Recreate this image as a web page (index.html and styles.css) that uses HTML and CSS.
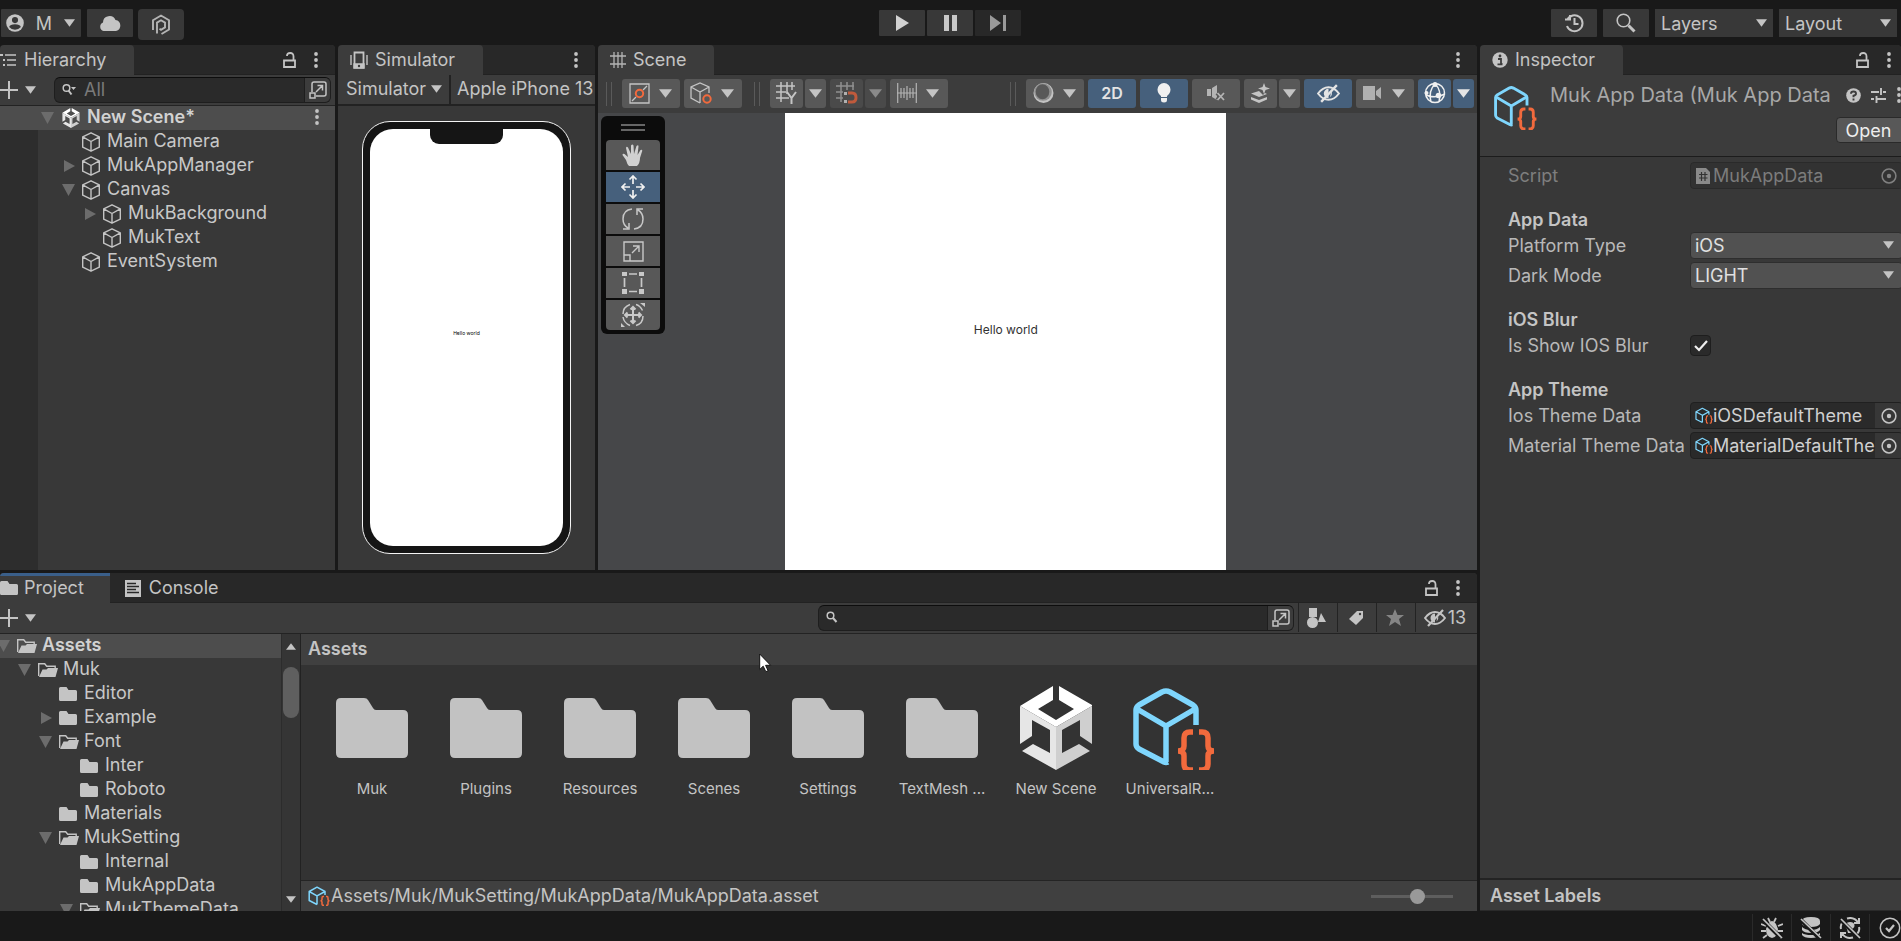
FILE: index.html
```html
<!DOCTYPE html>
<html lang="en">
<head>
<meta charset="utf-8">
<title>New Scene - Editor</title>
<link rel="stylesheet" href="styles.css">
</head>
<body>
<svg class="defs" aria-hidden="true">
  <symbol id="i-down" viewBox="0 0 12 8"><path d="M0 0h12L6 8z" fill="currentColor"/></symbol>
  <symbol id="i-fold-open" viewBox="0 0 14 14"><path d="M0 1h13L6.500 13z" fill="currentColor"/></symbol>
  <symbol id="i-fold-shut" viewBox="0 0 14 14"><path d="M2 1v12l11-6z" fill="currentColor"/></symbol>
  <symbol id="i-dots" viewBox="0 0 6 16"><g fill="currentColor"><circle cx="3" cy="2" r="1.900"/><circle cx="3" cy="8" r="1.900"/><circle cx="3" cy="14" r="1.900"/></g></symbol>
  <symbol id="i-lock" viewBox="0 0 13 16"><path d="M1 8.500h11V15H1zM10.500 8V4.500Q10.500 1 7.200 1T4 4" fill="none" stroke="currentColor" stroke-width="1.800"/></symbol>
  <symbol id="i-plus" viewBox="0 0 18 18"><path d="M9 0v18M0 9h18" stroke="currentColor" stroke-width="2"/></symbol>
  <symbol id="i-search" viewBox="0 0 14 14"><circle cx="4.500" cy="4.500" r="3.300" fill="none" stroke="currentColor" stroke-width="1.500"/><path d="M7 7l3.500 4" stroke="currentColor" stroke-width="2"/></symbol>
  <symbol id="i-pop" viewBox="0 0 18 18"><path d="M3 11V3q0-2 2-2h10q2 0 2 2v10q0 2-2 2H7" fill="none" stroke="currentColor" stroke-width="1.500"/><path d="M1 12h5v5H1zM7 11l6-6M8.500 4.500h5v5" fill="none" stroke="currentColor" stroke-width="1.500"/></symbol>
  <symbol id="i-cube" viewBox="0 0 20 20"><path d="M10 .8l8.300 4v10.400L10 19.200 1.700 15.200V4.800zM1.700 4.800L10 9.500l8.300-4.700M10 9.500v9.500" fill="none" stroke="currentColor" stroke-width="1.400" stroke-linejoin="round"/></symbol>
  <symbol id="i-folder" viewBox="0 0 20 16"><path d="M0 2.500Q0 1 1.500 1h6l2 3H16.500q1.500 0 1.500 1.500V13.500Q18 15 16.500 15h-15Q0 15 0 13.500z" fill="currentColor"/></symbol>
  <symbol id="i-folder-open" viewBox="0 0 20 16"><path d="M.7 14V1.700h6l2 2.600h8.500v2.400" fill="none" stroke="currentColor" stroke-width="1.400"/><path d="M4.500 7.500h4L10 6h10L17.500 15H1z" fill="currentColor"/></symbol>
  <symbol id="i-bigfolder" viewBox="0 0 72 60"><path d="M0 5Q0 0 5 0h23q3 0 4 2l5 8q1 2 3 2h27q5 0 5 5v38q0 5-5 5H5q-5 0-5-5z" fill="#c2c2c2"/></symbol>
  <symbol id="i-so" viewBox="0 0 84 84">
    <path d="M63 37V22q0-3-3-5L37 4q-4-2-8 0L6 17q-3 2-3 5v34q0 3 3 5l25 13q2 1 4 0M4 21l29 17 29-17M33 38v36" fill="none" stroke="#7fd6fd" stroke-width="5.500" stroke-linejoin="round"/>
    <path d="M60 44h-3q-6 0-6 6v8q0 5-6 5 6 0 6 5v8q0 6 6 6h3M66 44h3q6 0 6 6v8q0 5 6 5-6 0-6 5v8q0 6-6 6h-3" fill="none" stroke="#f26a3d" stroke-width="5.500"/>
  </symbol>
  <symbol id="i-so-small" viewBox="0 0 22 20">
    <path d="M17 9V5.500L9 1.200 1.200 5.500v9L9 18.500M1.200 5.500L9 9.800l8-4.300M9 9.800v8.700" fill="none" stroke="#7fd6fd" stroke-width="1.500" stroke-linejoin="round"/>
    <path d="M16 10.500h-1q-1 0-1 1.500v1.500q0 1.200-1.500 1.200 1.500 0 1.500 1.300v2q0 1.300 1 1.300h1M18 10.500h1q1 0 1 1.500v1.500q0 1.200 1.500 1.200-1.500 0-1.500 1.300v2q0 1.300-1 1.300h-1" fill="none" stroke="#f26a3d" stroke-width="1.500"/>
  </symbol>
  <symbol id="i-unity" viewBox="0 0 72 84">
    <path d="M33 0v14L18 23l18 11 18-11-15-9V0l33 19v1L36 41 0 20z" fill="#fff"/>
    <path d="M0 20l36 21v43L2 65l11-7 17 9V44L12 34v16L0 58z" fill="#e6e6e6"/>
    <path d="M72 20L36 41v43l34-19-11-7-17 9V44l18-10v16l12 8z" fill="#cfcfcf"/>
  </symbol>
  <symbol id="i-target" viewBox="0 0 16 16"><circle cx="8" cy="8" r="6.900" fill="none" stroke="currentColor" stroke-width="1.500"/><circle cx="8" cy="8" r="2.200" fill="currentColor"/></symbol>
  <symbol id="i-hidden" viewBox="0 0 22 18"><path d="M1 9Q5.500 3 11 3t10 6q-4.500 6-10 6T1 9z" fill="none" stroke="currentColor" stroke-width="1.900"/><path d="M11 4.500a4.500 4.500 0 0 0 0 9zM13.500 6.500q2 3-1 6" fill="currentColor"/><path d="M4 17L19 1" stroke="currentColor" stroke-width="2.200"/></symbol>
</svg>

<div class="app">
  <header class="topbar">
    <div class="group">
      <button class="tbtn account" aria-label="Account M"><svg width="18" height="18" viewBox="0 0 20 20"><circle cx="10" cy="10" r="9.800" fill="#c4c4c4"/><circle cx="10" cy="6.800" r="3.400" fill="#383838"/><path d="M3.500 14.500q1-3 6.500-3t6.500 3Q14 17.500 10 17.500T3.500 14.500z" fill="#383838"/></svg><span>M</span><svg width="11" height="8"><use href="#i-down"/></svg></button>
      <button class="tbtn small" aria-label="Cloud"><svg width="22" height="17" viewBox="0 0 22 17"><path d="M4.500 16A4.500 4.500 0 0 1 4 7.500 6.500 6.500 0 0 1 16.500 5 5.600 5.600 0 0 1 17 16z" fill="#c4c4c4"/></svg></button>
      <button class="tbtn small plastic" aria-label="Version control"><svg width="20" height="22" viewBox="0 0 20 22"><path d="M2 16V6.200L10 1.500l8 4.700v9.300L10.500 20M6 19.500V8.600l4-2.300 4 2.300v4.800l-4 2.400-1.500-1" fill="none" stroke="#b4b4b4" stroke-width="1.900"/></svg></button>
    </div>
    <div class="group play">
      <button class="tbtn" aria-label="Play"><svg width="13" height="16" viewBox="0 0 13 16"><path d="M0 0v16L13 8z" fill="#d2d2d2"/></svg></button>
      <button class="tbtn" aria-label="Pause"><svg width="13" height="16" viewBox="0 0 13 16"><path d="M0 0h5v16H0zM8 0h5v16H8z" fill="#c8c8c8"/></svg></button>
      <button class="tbtn off" aria-label="Step"><svg width="16" height="16" viewBox="0 0 16 16"><path d="M0 0v16l11-8zM13 0h3v16h-3z" fill="#9a9a9a"/></svg></button>
    </div>
    <div class="group right">
      <button class="tbtn small" aria-label="History"><svg width="20" height="20" viewBox="0 0 20 20"><path d="M3.200 7A8 8 0 1 1 3 13M1 6.500h5V2M10.500 5v6h4" fill="none" stroke="#c4c4c4" stroke-width="2"/></svg></button>
      <button class="tbtn small" aria-label="Search"><svg width="20" height="20" viewBox="0 0 20 20"><circle cx="7.500" cy="7.500" r="6.300" fill="none" stroke="#c4c4c4" stroke-width="1.600"/><path d="M12.500 12.500l6 6" stroke="#c4c4c4" stroke-width="3"/></svg></button>
      <label class="drop"><select aria-label="Layers"><option>Layers</option></select><svg width="11" height="8"><use href="#i-down"/></svg></label>
      <label class="drop"><select aria-label="Layout"><option>Layout</option></select><svg width="11" height="8"><use href="#i-down"/></svg></label>
    </div>
  </header>

  <div class="workspace">
    <main class="left">
      <div class="upper">
        <section class="panel hierarchy">
          <div class="tabs">
            <h2 class="tab bleed"><svg width="17" height="14" viewBox="0 0 17 14"><path d="M5 2h11M7 7h9M7 12h9" stroke="#c4c4c4" stroke-width="1.600"/><path d="M0 1h3v2H0zM3 6h2v2H3zM3 11h2v2H3z" fill="#c4c4c4"/></svg>Hierarchy</h2>
            <div class="tabtools"><button class="bare" aria-label="Lock"><svg width="13" height="16"><use href="#i-lock"/></svg></button><button class="bare" aria-label="Menu"><svg width="6" height="16"><use href="#i-dots"/></svg></button></div>
          </div>
          <div class="bar">
            <button class="bare add" aria-label="Add"><svg width="18" height="18"><use href="#i-plus"/></svg><svg width="11" height="8"><use href="#i-down"/></svg></button>
            <div class="search"><svg width="14" height="13" viewBox="0 0 14 13"><circle cx="4.500" cy="5" r="3.300" fill="none" stroke="#c4c4c4" stroke-width="1.500"/><path d="M6.500 7.500l3 4" stroke="#c4c4c4" stroke-width="2"/><path d="M9 4h5l-2.500 3z" fill="#c4c4c4"/></svg><input type="text" placeholder="All" aria-label="Search hierarchy"><button class="bare pop" aria-label="Open search"><svg width="18" height="18"><use href="#i-pop"/></svg></button></div>
          </div>
          <ul class="tree scene-tree">
            <li class="row root"><svg class="arrow"><use href="#i-fold-open"/></svg><svg class="ico"><use href="#i-unity"/></svg><b>New Scene*</b><button class="bare rowmenu" aria-label="Scene menu"><svg width="6" height="16"><use href="#i-dots"/></svg></button></li>
            <li class="row d1"><span class="arrow"></span><svg class="ico"><use href="#i-cube"/></svg>Main Camera</li>
            <li class="row d1"><svg class="arrow"><use href="#i-fold-shut"/></svg><svg class="ico"><use href="#i-cube"/></svg>MukAppManager</li>
            <li class="row d1"><svg class="arrow"><use href="#i-fold-open"/></svg><svg class="ico"><use href="#i-cube"/></svg>Canvas</li>
            <li class="row d2"><svg class="arrow"><use href="#i-fold-shut"/></svg><svg class="ico"><use href="#i-cube"/></svg>MukBackground</li>
            <li class="row d2"><span class="arrow"></span><svg class="ico"><use href="#i-cube"/></svg>MukText</li>
            <li class="row d1"><span class="arrow"></span><svg class="ico"><use href="#i-cube"/></svg>EventSystem</li>
          </ul>
        </section>

        <section class="panel simulator">
          <div class="tabs">
            <h2 class="tab"><svg width="18" height="18" viewBox="0 0 18 18"><path d="M4.500 1.500h9v15h-9z" fill="none" stroke="#c4c4c4" stroke-width="1.800"/><path d="M4 13h10v4H4zM1 4v10M17 4v10" fill="#c4c4c4" stroke="#c4c4c4" stroke-width="1.400"/><circle cx="9" cy="15" r="1.200" fill="#3c3c3c"/></svg>Simulator</h2>
            <div class="tabtools"><button class="bare" aria-label="Menu"><svg width="6" height="16"><use href="#i-dots"/></svg></button></div>
          </div>
          <div class="bar simbar">
            <button class="bare">Simulator<svg width="11" height="8"><use href="#i-down"/></svg></button>
            <button class="bare device">Apple iPhone 13</button>
          </div>
          <div class="simview"><div class="phone"><div class="screen"><i class="notch"></i><span>Hello world</span></div></div></div>
        </section>

        <section class="panel scene">
          <div class="tabs">
            <h2 class="tab"><svg width="16" height="16" viewBox="0 0 16 16"><path d="M4 0v16M8 0v16M12 0v16M0 4h16M0 12h16" stroke="#b4b4b4" stroke-width="1.300"/></svg>Scene</h2>
            <div class="tabtools"><button class="bare" aria-label="Menu"><svg width="6" height="16"><use href="#i-dots"/></svg></button></div>
          </div>
          <div class="scenebar">
            <div class="sgroup">
              <i class="grip"></i>
              <button class="sbtn wide" aria-label="Pivot"><svg width="21" height="21" viewBox="0 0 21 21"><path d="M1 1h19v19H1zM3 18l4-4M14 7l4-4" fill="none" stroke="#c4c4c4" stroke-width="1.300"/><circle cx="10.500" cy="10.500" r="3.700" fill="none" stroke="#f26a3d" stroke-width="2"/></svg><svg width="13" height="9"><use href="#i-down"/></svg></button>
              <button class="sbtn wide" aria-label="Orientation"><svg width="22" height="22" viewBox="0 0 22 22"><path d="M19 11V5l-9-4-9 4v11l9 5M1 5l9 5 9-5M10 10v11" fill="none" stroke="#c4c4c4" stroke-width="1.300"/><circle cx="17" cy="17" r="3.700" fill="none" stroke="#f26a3d" stroke-width="2"/></svg><svg width="13" height="9"><use href="#i-down"/></svg></button>
            </div>
            <div class="sgroup">
              <i class="grip"></i>
              <div class="pair"><button class="sbtn" aria-label="Grid axis"><svg width="21" height="22" viewBox="0 0 21 22"><path d="M5 0v20M11 0v12M16 0v8M0 4h19M0 10h10M0 16h13" stroke="#c4c4c4" stroke-width="1.500"/><path d="M11 10l4.500 6L20 10M15.500 15v7" fill="none" stroke="#c4c4c4" stroke-width="2"/></svg></button><button class="sbtn thin" aria-label="Grid options"><svg width="13" height="9"><use href="#i-down"/></svg></button></div>
              <div class="pair dim"><button class="sbtn" aria-label="Snap"><svg width="22" height="22" viewBox="0 0 22 22"><path d="M5 0v20M11 0v8M17 0v8M0 4h18M0 10h7M0 16h7" stroke="#909090" stroke-width="1.500"/><path d="M12 11h4q4 0 4 4.500t-4 4.500h-4" fill="none" stroke="#bf5a3c" stroke-width="3"/><path d="M8 10h3v3H8zM8 18h3v3H8z" fill="#b0b0b0"/></svg></button><button class="sbtn thin" aria-label="Snap options"><svg width="13" height="9"><use href="#i-down"/></svg></button></div>
              <button class="sbtn wide" aria-label="Increment"><svg width="20" height="20" viewBox="0 0 20 20"><path d="M.7 0v20M19.300 0v20M0 10h20M4 5v10M7 5v10M10 3v14M13 5v10M16 5v10" stroke="#b4b4b4" stroke-width="1.200"/></svg><svg width="13" height="9"><use href="#i-down"/></svg></button>
            </div>
            <div class="sgroup end">
              <i class="grip"></i>
              <button class="sbtn wide" aria-label="Draw mode"><svg width="21" height="22" viewBox="0 0 21 22"><circle cx="10.500" cy="11" r="10" fill="#c4c4c4"/><circle cx="10" cy="10" r="8.800" fill="#909090"/><ellipse cx="9.500" cy="9.700" rx="6.800" ry="7.500" fill="#585858"/></svg><svg width="13" height="9"><use href="#i-down"/></svg></button>
              <button class="sbtn mid on">2D</button>
              <button class="sbtn mid on" aria-label="Lighting"><svg width="14" height="20" viewBox="0 0 14 20"><path d="M4 13Q.5 10 .5 6.500a6.500 6.500 0 0 1 13 0Q13.500 10 10 13v4q0 2.500-3 2.500T4 17z" fill="#f0f0f0"/><path d="M4 14.500h6" stroke="#46607c"/></svg></button>
              <button class="sbtn mid" aria-label="Audio"><svg width="18" height="16" viewBox="0 0 18 16"><path d="M0 4h4v7H0zM5 3l5-3v15l-5-3z" fill="#b4b4b4"/><path d="M10 8l7 7M17 8l-7 7" stroke="#585858" stroke-width="4"/><path d="M10.500 8l6.500 7M17 8l-6.500 7" stroke="#b4b4b4" stroke-width="1.800"/></svg></button>
              <div class="pair"><button class="sbtn" aria-label="Effects"><svg width="19" height="20" viewBox="0 0 19 20"><path d="M13 0l1.500 4L19 5.500 14.500 7 13 11l-1.500-4L7 5.500 11.500 4zM8 8L0 10.500 8 14l8-3-2-1-2 2zM0 14l8 3 8-3v2.500L8 20l-8-3.500z" fill="#c4c4c4"/></svg></button><button class="sbtn thin" aria-label="Effects options"><svg width="13" height="9"><use href="#i-down"/></svg></button></div>
              <button class="sbtn mid on" aria-label="Visibility"><svg width="23" height="19"><use href="#i-hidden"/></svg></button>
              <button class="sbtn wide" aria-label="Camera"><svg width="20" height="14" viewBox="0 0 20 14"><path d="M0 0h12v14H0zM13 5l5-4v12l-5-4z" fill="#b0b0b0"/></svg><svg width="13" height="9"><use href="#i-down"/></svg></button>
              <div class="pair"><button class="sbtn on" aria-label="Gizmos"><svg width="22" height="22" viewBox="0 0 22 22"><g fill="none" stroke="#f0f0f0" stroke-width="1.500"><circle cx="11" cy="11" r="9.500"/><path d="M11 2Q4 9 7 20M11 2q7 6 4 18M2 13q9 4 19-1"/></g><circle cx="11" cy="2.500" r="2.500" fill="#f0f0f0"/><circle cx="14.500" cy="13.500" r="2.800" fill="#f0f0f0"/><circle cx="2.500" cy="11" r="2" fill="#f0f0f0"/></svg></button><button class="sbtn thin on" aria-label="Gizmo options"><svg width="13" height="9"><use href="#i-down"/></svg></button></div>
            </div>
          </div>
          <div class="sceneview">
            <div class="canvas">Hello world</div>
            <div class="tools">
              <i class="handle"></i>
              <button aria-label="Hand"><svg width="22" height="23" viewBox="0 0 22 23"><path d="M7 22Q5 20 4 16L.5 11q0-2 2-1L6 13 4 4q.5-2 2-.5L9 10V1.500q1.500-2 2.500 0L12 10l2.500-8q2-1.500 2 .5L15.500 11l3-5q2-1 1.700 1L18 14q0 5-3 8z" fill="#d0d0d0"/></svg></button>
              <button class="on" aria-label="Move"><svg width="24" height="24" viewBox="0 0 24 24"><path d="M12 9V1M8.500 4.500L12 1l3.500 3.500M12 15v8M8.500 19.500L12 23l3.500-3.500M9 12H1M4.500 8.500L1 12l3.500 3.500M15 12h8M19.500 8.500L23 12l-3.500 3.500" fill="none" stroke="#f0f0f0" stroke-width="1.700"/></svg></button>
              <button aria-label="Rotate"><svg width="22" height="22" viewBox="0 0 22 22"><path d="M10 1Q1 2 1 11q0 6 5 9M1 21h6v-6M12 21q9-1 9-10 0-6-5-9M21 1h-6v6" fill="none" stroke="#c8c8c8" stroke-width="1.500"/></svg></button>
              <button aria-label="Scale"><svg width="21" height="21" viewBox="0 0 21 21"><path d="M1 1h19v19H1zM1 14h6v6M9 12l7-7M10 5h6v6" fill="none" stroke="#c8c8c8" stroke-width="1.400"/></svg></button>
              <button aria-label="Rect"><svg width="22" height="22" viewBox="0 0 22 22"><path d="M0 0h5v4H0zM17 0h5v4h-5zM0 17h5v5H0zM17 17h5v5h-5z" fill="#c8c8c8"/><path d="M7 2h8M7 19.500h8M2.500 6v9M19.500 6v9" stroke="#c8c8c8" stroke-width="1.700"/></svg></button>
              <button aria-label="Transform"><svg width="24" height="24" viewBox="0 0 24 24"><path d="M9 1.500Q2 4 2 11M15 22.500q7-2 7-9.500M2 14q1 6 7 8.500M15 1.500q4 1 6.500 6" fill="none" stroke="#c8c8c8" stroke-width="1.500"/><path d="M12 4v16M4 12h16M9.500 6.500L12 4l2.500 2.500M9.500 17.500L12 20l2.500-2.500M6.500 9.500L4 12l2.500 2.500M17.500 9.500L20 12l-2.500 2.500" fill="none" stroke="#c8c8c8" stroke-width="2"/><path d="M19 0h5v4zM0 20v4h4z" fill="#c8c8c8"/></svg></button>
            </div>
          </div>
        </section>
      </div>

      <section class="panel project">
        <div class="tabs">
          <h2 class="tab bleed active"><svg width="18" height="16" viewBox="0 0 18 16"><use href="#i-folder" width="20" height="16"/></svg>Project</h2>
          <h2 class="tab idle"><svg width="16" height="17" viewBox="0 0 16 17"><path d="M0 0h16v17H0z" fill="#c4c4c4"/><path d="M2 3.500h9M2 6.500h12M2 9.500h9M2 12.500h12" stroke="#282828" stroke-width="1.300"/></svg>Console</h2>
          <div class="tabtools"><button class="bare" aria-label="Lock"><svg width="13" height="16"><use href="#i-lock"/></svg></button><button class="bare" aria-label="Menu"><svg width="6" height="16"><use href="#i-dots"/></svg></button></div>
        </div>
        <div class="bar">
          <button class="bare add" aria-label="Create"><svg width="18" height="18"><use href="#i-plus"/></svg><svg width="11" height="8"><use href="#i-down"/></svg></button>
          <div class="search assetsearch"><svg width="14" height="14"><use href="#i-search"/></svg><input type="text" aria-label="Search assets"><button class="bare pop" aria-label="Open search"><svg width="18" height="18"><use href="#i-pop"/></svg></button></div>
          <div class="filters">
            <button class="bare" aria-label="Filter by type"><svg width="19" height="20" viewBox="0 0 19 20"><path d="M2 0h8v9H2zM14 5l5 9h-8z" fill="#c4c4c4"/><circle cx="5.500" cy="14.500" r="5.500" fill="#c4c4c4"/></svg></button>
            <button class="bare" aria-label="Filter by label"><svg width="16" height="16" viewBox="0 0 16 16"><path d="M9 1h6v7l-7 7-7-6z" fill="#c4c4c4"/><circle cx="12" cy="4" r="1.200" fill="#3c3c3c"/></svg></button>
            <button class="bare" aria-label="Favorites"><svg width="18" height="17" viewBox="0 0 18 17"><path d="M9 0l2.500 6H18l-5 4 2 7-6-4-6 4 2-7-5-4h6.500z" fill="#858585"/></svg></button>
            <button class="bare count"><svg width="22" height="18"><use href="#i-hidden"/></svg>13</button>
          </div>
        </div>
        <div class="browser">
          <div class="treewrap">
            <ul class="tree folders">
              <li class="row root"><svg class="arrow"><use href="#i-fold-open"/></svg><svg class="ico fo"><use href="#i-folder-open"/></svg><b>Assets</b></li>
              <li class="row d1"><svg class="arrow"><use href="#i-fold-open"/></svg><svg class="ico fo"><use href="#i-folder-open"/></svg>Muk</li>
              <li class="row d2"><span class="arrow"></span><svg class="ico fo"><use href="#i-folder"/></svg>Editor</li>
              <li class="row d2"><svg class="arrow"><use href="#i-fold-shut"/></svg><svg class="ico fo"><use href="#i-folder"/></svg>Example</li>
              <li class="row d2"><svg class="arrow"><use href="#i-fold-open"/></svg><svg class="ico fo"><use href="#i-folder-open"/></svg>Font</li>
              <li class="row d3"><span class="arrow"></span><svg class="ico fo"><use href="#i-folder"/></svg>Inter</li>
              <li class="row d3"><span class="arrow"></span><svg class="ico fo"><use href="#i-folder"/></svg>Roboto</li>
              <li class="row d2"><span class="arrow"></span><svg class="ico fo"><use href="#i-folder"/></svg>Materials</li>
              <li class="row d2"><svg class="arrow"><use href="#i-fold-open"/></svg><svg class="ico fo"><use href="#i-folder-open"/></svg>MukSetting</li>
              <li class="row d3"><span class="arrow"></span><svg class="ico fo"><use href="#i-folder"/></svg>Internal</li>
              <li class="row d3"><span class="arrow"></span><svg class="ico fo"><use href="#i-folder"/></svg>MukAppData</li>
              <li class="row d3"><svg class="arrow"><use href="#i-fold-open"/></svg><svg class="ico fo"><use href="#i-folder-open"/></svg>MukThemeData</li>
            </ul>
            <div class="scroll"><svg class="flip" width="10" height="7"><use href="#i-down"/></svg><i class="thumb"></i><svg width="10" height="7"><use href="#i-down"/></svg></div>
          </div>
          <div class="content">
            <div class="crumb">Assets<svg class="cursor" width="13" height="20" viewBox="0 0 13 20"><path d="M.7 1v15.500l3.500-3.300 2.600 5.500 2.300-1L6.600 12.300h5z" fill="#fff" stroke="#111"/></svg></div>
            <div class="grid">
              <figure><svg width="72" height="60"><use href="#i-bigfolder"/></svg><figcaption>Muk</figcaption></figure>
              <figure><svg width="72" height="60"><use href="#i-bigfolder"/></svg><figcaption>Plugins</figcaption></figure>
              <figure><svg width="72" height="60"><use href="#i-bigfolder"/></svg><figcaption>Resources</figcaption></figure>
              <figure><svg width="72" height="60"><use href="#i-bigfolder"/></svg><figcaption>Scenes</figcaption></figure>
              <figure><svg width="72" height="60"><use href="#i-bigfolder"/></svg><figcaption>Settings</figcaption></figure>
              <figure><svg width="72" height="60"><use href="#i-bigfolder"/></svg><figcaption>TextMesh ...</figcaption></figure>
              <figure><svg width="72" height="84"><use href="#i-unity"/></svg><figcaption>New Scene</figcaption></figure>
              <figure><svg width="96" height="84" viewBox="0 0 96 84"><use href="#i-so" x="11" y="2" width="84" height="84"/></svg><figcaption>UniversalR...</figcaption></figure>
            </div>
            <div class="path"><svg width="22" height="20"><use href="#i-so-small"/></svg><span>Assets/Muk/MukSetting/MukAppData/MukAppData.asset</span><input type="range" min="0" max="100" value="58" aria-label="Icon size"></div>
          </div>
        </div>
      </section>
    </main>

    <aside class="panel inspector">
      <div class="tabs">
        <h2 class="tab"><svg width="16" height="16" viewBox="0 0 16 16"><circle cx="8" cy="8" r="7.700" fill="#c4c4c4"/><path d="M6 7h3v5h1.500M5.500 12.300h5" fill="none" stroke="#3c3c3c" stroke-width="1.800"/><circle cx="8" cy="4" r="1.400" fill="#3c3c3c"/></svg>Inspector</h2>
        <div class="tabtools"><button class="bare" aria-label="Lock"><svg width="13" height="16"><use href="#i-lock"/></svg></button><button class="bare" aria-label="Menu"><svg width="6" height="16"><use href="#i-dots"/></svg></button></div>
      </div>
      <div class="head">
        <svg width="44" height="44"><use href="#i-so"/></svg>
        <div class="headmain">
          <div class="headline"><span class="title">Muk App Data (Muk App Data</span>
            <button class="bare" aria-label="Help"><svg width="15" height="15" viewBox="0 0 15 15"><circle cx="7.500" cy="7.500" r="7.300" fill="#c4c4c4"/><path d="M5 5.800Q5 3.500 7.500 3.500T10 5.700q0 1.300-2.500 2v1.500M7.500 10.500v2" fill="none" stroke="#3c3c3c" stroke-width="1.900"/></svg></button>
            <button class="bare" aria-label="Presets"><svg width="15" height="15" viewBox="0 0 15 15"><path d="M0 4h8M12 4h3M10 0v7M0 11h3M6 11h9M5.500 8v7" stroke="#c4c4c4" stroke-width="1.900"/></svg></button>
            <button class="bare" aria-label="More"><svg width="6" height="16"><use href="#i-dots"/></svg></button>
          </div>
          <button class="open">Open</button>
        </div>
      </div>
      <div class="props">
        <div class="prop disabled"><label for="p-script">Script</label><div class="obj"><svg width="14" height="16" viewBox="0 0 14 16"><path d="M0 0h10l4 4v12H0z" fill="#8a8a8a"/><path d="M5.500 4v9M9 4v9M3 6.500h8.500M3 10h8.500" stroke="#333" stroke-width="1.200"/></svg><input id="p-script" type="text" value="MukAppData" disabled><button class="bare pick" aria-label="Pick script"><svg width="16" height="16"><use href="#i-target"/></svg></button></div></div>
        <h3>App Data</h3>
        <div class="prop"><label for="p-platform">Platform Type</label><div class="sel"><select id="p-platform"><option>iOS</option></select><svg width="11" height="8"><use href="#i-down"/></svg></div></div>
        <div class="prop"><label for="p-mode">Dark Mode</label><div class="sel"><select id="p-mode"><option>LIGHT</option></select><svg width="11" height="8"><use href="#i-down"/></svg></div></div>
        <h3>iOS Blur</h3>
        <div class="prop short"><label for="p-blur">Is Show IOS Blur</label><div class="check"><input id="p-blur" type="checkbox" checked><svg width="14" height="12" viewBox="0 0 14 12"><path d="M1 6l4 4 8-9" fill="none" stroke="#eee" stroke-width="2.200"/></svg></div></div>
        <h3>App Theme</h3>
        <div class="prop"><label for="p-ios">Ios Theme Data</label><div class="obj"><svg width="18" height="17"><use href="#i-so-small"/></svg><input id="p-ios" type="text" value="iOSDefaultTheme"><button class="bare pick" aria-label="Pick iOS theme"><svg width="16" height="16"><use href="#i-target"/></svg></button></div></div>
        <div class="prop"><label for="p-mat">Material Theme Data</label><div class="obj"><svg width="18" height="17"><use href="#i-so-small"/></svg><input id="p-mat" type="text" value="MaterialDefaultTheme"><button class="bare pick" aria-label="Pick material theme"><svg width="16" height="16"><use href="#i-target"/></svg></button></div></div>
      </div>
      <div class="labels">Asset Labels</div>
    </aside>
  </div>

  <footer class="status">
    <button class="bare" aria-label="Debugger"><svg width="22" height="22" viewBox="0 0 22 22"><path d="M7 7q4-6 8 0l2 5q0 8-6 9-6-1-6-9z" fill="#c4c4c4"/><path d="M7 1l2 4M15 1l-2 4M0 7l5 2M22 7l-5 2M0 14h5M22 14h-5M2 21l4-3M20 21l-4-3" stroke="#c4c4c4" stroke-width="1.800"/><path d="M2 3l18 18" stroke="#191919" stroke-width="4"/><path d="M2 2l19 19" stroke="#c4c4c4" stroke-width="1.700"/></svg></button>
    <button class="bare" aria-label="Cache server"><svg width="22" height="22" viewBox="0 0 22 22"><path d="M2 4q0-4 9-4t9 4v3q-2 3-9 3T2 7zM2 10q3 3 9 3t9-3v3q-2 3-9 3t-9-3zM2 16q3 2 9 2t9-2v2q-2 3-9 3t-9-3z" fill="#c4c4c4"/><path d="M1 3l19 19" stroke="#191919" stroke-width="4"/><path d="M1 2l20 19" stroke="#c4c4c4" stroke-width="1.700"/></svg></button>
    <button class="bare" aria-label="Auto lighting"><svg width="22" height="22" viewBox="0 0 22 22"><path d="M8 1.500q7-2 11 4M20 1v5h-5M14 20.500q-7 2-11-4M2 21v-5h5M2 12Q1 8 4 5M20 10q1 4-2 7" fill="none" stroke="#c4c4c4" stroke-width="2"/><path d="M8 12q-2-2-1-5 1-2 4-2 4 0 4.500 3 .5 2-2 4v4H9z" fill="#c4c4c4"/><path d="M2 3l18 18" stroke="#191919" stroke-width="4"/><path d="M2 2l19 19" stroke="#c4c4c4" stroke-width="1.700"/></svg></button>
    <button class="bare" aria-label="Tasks"><svg width="22" height="22" viewBox="0 0 22 22"><circle cx="11" cy="11" r="9.700" fill="none" stroke="#c4c4c4" stroke-width="1.500"/><path d="M7 11l3 3 5-6" fill="none" stroke="#c4c4c4" stroke-width="2.200"/></svg></button>
  </footer>
</div>
</body>
</html>
```
FILE: styles.css
```css
* { box-sizing: border-box; }
body { margin: 0; background: #191919; }
.app, button, input, select { font-family: Inter, "Liberation Sans", sans-serif; font-size: 18px; color: #c4c4c4; }
.app { display: flex; flex-direction: column; height: 100vh; overflow: hidden; line-height: 24px; white-space: nowrap; }
.defs { position: absolute; width: 0; height: 0; }
svg { display: block; flex: none; }
button { margin: 0; padding: 0; border: 0; cursor: default; }
h2, h3 { margin: 0; font-size: 18px; font-weight: 400; }
h3 { font-weight: 600; }
b { font-weight: 600; }
ul { list-style: none; margin: 0; padding: 0; }
.bare { background: none; display: flex; align-items: center; justify-content: center; }

/* Top toolbar */
.topbar { display: grid; grid-template-columns: 1fr auto 1fr; height: 45px; flex: none; padding: 9px 4px 0 1px; }
.group { display: flex; gap: 6px; align-items: flex-start; }
.group.right { justify-content: flex-end; }
.tbtn { display: flex; align-items: center; justify-content: center; height: 28px; background: #383838; border-radius: 1px; }
.small { width: 46px; }
.account { width: 80px; gap: 12px; justify-content: flex-end; padding-right: 6px; }
.plastic { height: 31px; border-radius: 4px; margin-left: -1px; }
.play { gap: 2px; padding: 1px 0 0 2px; }
.play .tbtn { width: 46px; height: 26px; }
.play .off { background: #282828; }
.drop { position: relative; width: 118px; height: 28px; background: #383838; }
.drop select { width: 100%; height: 100%; padding: 0 6px; }
select { appearance: none; background: none; border: 0; margin: 0; }
.drop svg, .sel svg { position: absolute; right: 6px; top: 10px; pointer-events: none; }

/* Panels */
.workspace { display: flex; gap: 3px; flex: 1; min-height: 0; }
.left { flex: 1; min-width: 0; display: flex; flex-direction: column; gap: 3px; }
.upper { display: flex; gap: 3px; flex: 1; min-height: 0; }
.panel { display: flex; flex-direction: column; background: #383838; overflow: hidden; border-radius: 4px 4px 0 0; }
.hierarchy { width: 335px; }
.simulator { width: 257px; }
.scene { flex: 1; min-width: 0; }
.project { height: 338px; flex: none; }
.inspector { width: 421px; }
.tabs { display: flex; height: 30px; flex: none; background: #282828; border-bottom: 1px solid #222; }
.tab { display: flex; align-items: center; gap: 7px; height: 30px; padding: 0 28px 0 12px; background: #3c3c3c; border-radius: 4px 4px 0 0; }
.tab.bleed { padding-left: 0; }
.tab.idle { background: none; padding-left: 15px; gap: 8px; }
.tab.active { border-top: 3px solid #3a5f8a; padding: 0 26px 3px 0; gap: 6px; border-radius: 0; }
.tabtools { display: flex; align-items: center; gap: 17px; margin-left: auto; padding-right: 16px; }
.inspector .tabtools { padding-right: 9px; }
.bar { display: flex; align-items: center; height: 31px; flex: none; background: #3c3c3c; border-bottom: 1px solid #232323; padding: 0 4px 1px 0; }
.add { gap: 7px; }
.search { display: flex; align-items: center; flex: 1; height: 26px; margin-left: 18px; padding-left: 7px; background: #2a2a2a; border: 1px solid #1e1e1e; border-top-color: #0d0d0d; border-radius: 6px; overflow: hidden; min-width: 0; }
.search input { flex: 1; min-width: 0; height: 100%; background: none; border: 0; padding: 0 8px; outline: 0; }
.search input::placeholder { color: #7a7a7a; opacity: 1; }
.pop { width: 26px; height: 100%; background: #3c3c3c; border-left: 1px solid #1e1e1e; }

/* Trees */
.tree { flex: 1; min-height: 0; }
.row { display: flex; align-items: center; height: 24px; padding-left: 41px; padding-bottom: 2px; color: #c8c8c8; }
.row.d1 { padding-left: 62px; }
.row.d2 { padding-left: 83px; }
.arrow { width: 14px; height: 14px; margin: 2px 5px 0 0; color: #6c6c6c; flex: none; }
.ico { width: 20px; height: 20px; margin: 2px 6px 0 0; color: #c4c4c4; }
.row.root { background: #4d4d4d; color: #d2d2d2; }
.scene-tree .root .arrow { margin-right: 6px; }
.rowmenu { margin-left: auto; padding-right: 15px; }
.scene-tree { background: linear-gradient(90deg, #2d2d2d 38px, #383838 38px); }
.folders .row { padding-left: 0; }
.folders .arrow { margin-left: -3px; margin-right: 6px; }
.folders .d1 { padding-left: 21px; }
.folders .d2 { padding-left: 42px; }
.folders .d3 { padding-left: 63px; }
.ico.fo { height: 16px; margin-right: 5px; }

/* Simulator */
.simbar { padding: 0; gap: 2px; background: #222; align-items: stretch; height: 31px; border-bottom: 2px solid #222; }
.simbar button { background: #3c3c3c; padding: 0 7px 2px 8px; gap: 5px; }
.simbar .device { flex: 1; padding: 0 0 2px 6px; justify-content: flex-start; overflow: hidden; }
.simview { flex: 1; display: flex; align-items: center; justify-content: center; }
.phone { width: 209px; aspect-ratio: 209 / 433; padding: 7px; margin-bottom: 2px; background: #151515; border: 1px solid #f4f4f4; border-radius: 28px; }
.screen { position: relative; height: 100%; background: #fff; border-radius: 23px; display: flex; align-items: center; justify-content: center; padding-bottom: 8px; font-size: 5px; line-height: 8px; color: #000; }
.notch { position: absolute; top: 0; left: 60px; right: 60px; height: 15px; background: #151515; border-radius: 0 0 9px 9px; }

/* Scene */
.scenebar { display: flex; align-items: center; height: 38px; flex: none; background: #3c3c3c; padding: 0 3px 2px 8px; gap: 12px; }
.sgroup { display: flex; gap: 4px; }
.sgroup.end { margin-left: auto; }
.grip { width: 6px; height: 24px; margin: 3px 6px 0 0; border: solid #5a5a5a; border-width: 0 1px; }
.sbtn { display: flex; align-items: center; justify-content: center; height: 29px; width: 33px; background: #585858; border-radius: 3px; }
.sbtn.wide { width: 58px; gap: 9px; padding-right: 2px; }
.sbtn.mid { width: 48px; }
.sbtn.thin { width: 21px; }
.sbtn.on { background: #46607c; color: #e4e4e4; font-weight: 600; font-size: 16px; }
.pair { display: flex; gap: 2px; }
.dim .sbtn { background: #4a4a4a; color: #8a8a8a; }
.sceneview { position: relative; flex: 1; background: #464749; display: flex; }
.canvas { width: 50.2%; margin-left: 21.3%; background: #fff; color: #323232; display: flex; align-items: center; justify-content: center; font-size: 12px; padding-bottom: 24px; }
.tools { position: absolute; left: 3px; top: 3px; width: 64px; padding: 8px 5px 4px; background: #0c0c0c; border-radius: 6px; display: flex; flex-direction: column; gap: 2px; }
.tools button { display: flex; align-items: center; justify-content: center; height: 30px; background: #585858; }
.tools button.on { background: #46607c; }
.tools button:nth-of-type(1) { border-radius: 4px 4px 0 0; }
.tools button:last-child { border-radius: 0 0 4px 4px; }
.handle { width: 24px; height: 7px; margin: 0 auto 7px; border: solid #666; border-width: 2px 0; }

/* Project */
.assetsearch { flex: none; width: 476px; margin-left: auto; }
.filters { display: flex; align-self: stretch; margin: 0 -4px 0 4px; }
.filters button { width: 39px; padding-right: 3px; border-left: 1px solid #232323; }
.filters .count { width: 62px; gap: 2px; }
.browser { display: flex; flex: 1; min-height: 0; }
.treewrap { display: flex; width: 301px; overflow: hidden; border-right: 1px solid #222; }
.scroll { width: 19px; display: flex; flex-direction: column; align-items: center; padding: 9px 0 8px; background: #353535; border-left: 1px solid #2c2c2c; }
.flip { transform: rotate(180deg); }
.thumb { width: 16px; height: 51px; margin: 17px 0 auto; border-radius: 8px; background: #5f5f5f; }
.content { flex: 1; min-width: 0; display: flex; flex-direction: column; background: #333; }
.crumb { position: relative; height: 31px; padding: 3px 7px; background: #404040; font-weight: 600; }
.cursor { position: absolute; left: 458px; top: 19px; z-index: 1; }
.grid { display: flex; flex: 1; padding: 21px 0 0 14px; }
figure { width: 114px; margin: 0; display: flex; flex-direction: column; align-items: center; }
figure svg { height: 84px; margin-bottom: 7px; }
figcaption { font-size: 15px; }
.path { display: flex; align-items: center; height: 31px; padding: 0 24px 0 7px; gap: 1px; background: #404040; border-top: 1px solid #242424; }
.path input { margin: 0 0 0 auto; width: 82px; height: 16px; appearance: none; background: linear-gradient(#5e5e5e, #5e5e5e) center / 100% 3px no-repeat; }
.path input::-webkit-slider-thumb { appearance: none; width: 15px; height: 15px; border-radius: 50%; background: #999; }

/* Inspector */
.head { display: flex; height: 82px; flex: none; padding: 8px 0 0 14px; background: #3c3c3c; border-bottom: 1px solid #1c1c1c; gap: 12px; }
.head > svg { margin-top: 3px; }
.headmain { flex: 1; min-width: 0; }
.headline { display: flex; align-items: center; gap: 10px; margin-right: -1px; }
.headline .bare { flex: none; }
.title { flex: 1; min-width: 0; overflow: hidden; color: #a8a8a8; font-size: 20px; }
.open { display: block; margin: 10px -4px 0 auto; width: 69px; height: 26px; background: #585858; border: 1px solid #2a2a2a; border-radius: 4px; color: #eee; padding-right: 4px; }
.props { flex: 1; padding: 5px 0 0 28px; display: flex; flex-direction: column; }
.prop { display: grid; grid-template-columns: 178px 1fr; column-gap: 4px; align-items: center; min-height: 27px; margin: 0 -2px 3px 0; flex: none; }
.prop label { overflow: hidden; color: #b8b8b8; }
.props h3 { height: 24px; margin-top: 16px; flex: none; }
.obj, .sel { position: relative; display: flex; align-items: center; height: 27px; min-width: 0; background: #2a2a2a; border: 1px solid #202020; border-radius: 4px; padding-left: 4px; overflow: hidden; }
.obj input { flex: 1; min-width: 0; background: none; border: 0; outline: 0; padding: 0; color: #d0d0d0; }
.pick { width: 27px; height: 100%; background: #373737; }
.sel { background: #515151; border-color: #2e2e2e; padding: 0; }
.sel select { flex: 1; height: 100%; padding: 0 4px; color: #e0e0e0; }
.sel svg { right: 8px; top: 8px; }
.disabled label { color: #7e7e7e; }
.disabled input { color: #7c7c7c; }
.disabled .obj, .disabled .pick { background: #323232; color: #808080; }
.disabled .obj { gap: 3px; padding-left: 5px; border-color: #2a2a2a; }
.check { position: relative; width: 21px; height: 21px; }
.check input { appearance: none; display: block; margin: 0; width: 21px; height: 21px; background: #2a2a2a; border: 1px solid #1e1e1e; border-radius: 4px; }
.check svg { position: absolute; left: 4px; top: 5px; pointer-events: none; }
.labels { height: 33px; flex: none; padding: 4px 10px; background: #3c3c3c; border-top: 2px solid #232323; border-bottom: 1px solid #2a2a2a; font-weight: 600; }

/* Status bar */
.status { display: flex; justify-content: flex-end; height: 30px; flex: none; padding: 3px 0 0; }
.status button { width: 39px; border-left: 1px solid #2a2a2a; padding-left: 0; }
.status button:last-child { width: 32px; padding-left: 8px; }
```
